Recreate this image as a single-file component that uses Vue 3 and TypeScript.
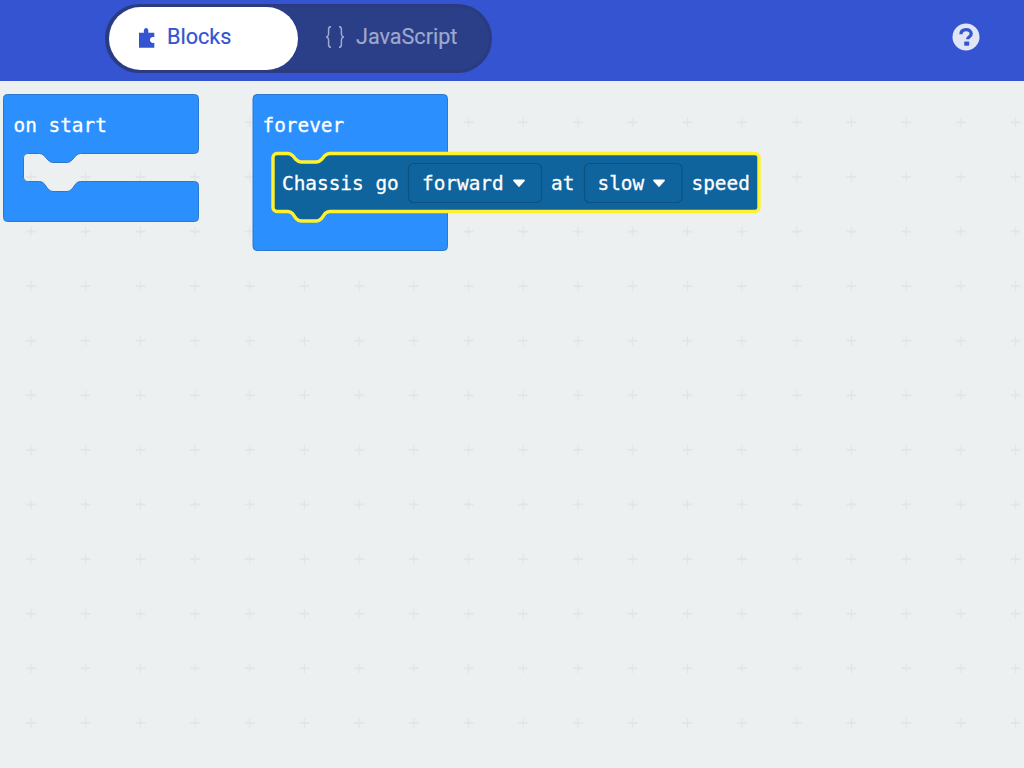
<script setup lang="ts">
</script>

<template>
  <div class="app">
    <header class="bar">
      <div class="toggle">
        <div class="tab active">
          <svg class="puzzle" width="17" height="20" viewBox="0 0 17 20" aria-hidden="true">
            <path d="M0 4.700 H5 C4.600 3.500 4.800 0 7.100 0 C9.400 0 9.600 3.500 9.300 4.700 H15.300 V9.300 C13 8.600 11 9.800 11 12 C11 14.200 13 15.400 15.300 14.700 V19.700 H0 Z" fill="#3454d1" />
          </svg>
          <span class="label">Blocks</span>
        </div>
        <div class="tab inactive">
          <svg class="braces" width="18" height="22" viewBox="0 0 18 22" aria-hidden="true">
            <path d="M5 0.700 C2.800 0.700 2.600 2 2.600 3.500 V8 C2.600 9.600 1.800 10.600 0.500 11 C1.800 11.400 2.600 12.400 2.600 14 V18.500 C2.600 20 2.800 21.300 5 21.300" />
            <path d="M13 0.700 C15.200 0.700 15.400 2 15.400 3.500 V8 C15.400 9.600 16.200 10.600 17.500 11 C16.200 11.400 15.400 12.400 15.400 14 V18.500 C15.400 20 15.200 21.300 13 21.300" />
          </svg>
          <span class="label">JavaScript</span>
        </div>
      </div>
      <svg class="help" width="28" height="28" viewBox="0 0 28 28" aria-hidden="true">
        <circle cx="14" cy="14" r="13.5" fill="#e1e6f7" />
        <path d="M8.9 11.2 C9 8.2 11.2 6.6 14.1 6.6 C17 6.6 19.2 8.2 19.2 10.8 C19.2 13.9 15.6 14 15.6 16.2" fill="none" stroke="#3454d1" stroke-width="3.3" />
        <rect x="12.2" y="18.6" width="5" height="4.2" rx="0.8" fill="#3454d1" />
      </svg>
    </header>

    <main class="workspace">
      <svg class="canvas" width="1024" height="687" viewBox="0 81 1024 687">
        <defs>
          <pattern id="grid" x="3.7" y="94.5" width="54.7" height="54.6" patternUnits="userSpaceOnUse">
            <path d="M27.3 22.800 V32.800 M22.300 27.800 H32.300" stroke="#e0e4e5" stroke-width="1.300" fill="none" />
          </pattern>
        </defs>
        <rect x="0" y="81" width="1024" height="687" fill="url(#grid)" />

        <path class="hat" d="M8 94.5 H194.5 a4 4 0 0 1 4 4 V149.5 a4 4 0 0 1 -4 4 H80.500 Q78 153.500 76 155.500 L72 160 Q69.500 162.500 67 162.500 H53 Q50.500 162.500 48 160 L44 155.500 Q42 153.500 39.500 153.500 H27.500 a4 4 0 0 0 -4 4 V177.500 a4 4 0 0 0 4 4 H39.500 Q42 181.500 44 183.500 L48 189 Q50.500 191.500 53 191.500 H67 Q69.500 191.500 72 189 L76 183.500 Q78 181.500 80.500 181.500 H194.500 a4 4 0 0 1 4 4 V217.500 a4 4 0 0 1 -4 4 H7.500 a4 4 0 0 1 -4 -4 V98.500 a4 4 0 0 1 4 -4 Z" />
        <text class="code" x="13.500" y="131.500">on start</text>

        <path class="hat" d="M257 94.5 H443.500 a4 4 0 0 1 4 4 V246.500 a4 4 0 0 1 -4 4 H257 a4 4 0 0 1 -4 -4 V98.500 a4 4 0 0 1 4 -4 Z" />
        <text class="code" x="262.500" y="131.500">forever</text>

        <path class="stmt" d="M277 153.500 H288 Q290.500 153.500 292.500 155.500 L296 159.500 Q298.500 162 301 162 H316.500 Q319 162 321.500 159.500 L325 155.500 Q327 153.500 329.500 153.500 H755 a4 4 0 0 1 4 4 V207.500 a4 4 0 0 1 -4 4 H329.500 Q327 211.500 325 213.500 L321.500 218.500 Q319 221 316.500 221 H301 Q298.500 221 296 218.500 L292.500 213.500 Q290.500 211.500 288 211.500 H277 a4 4 0 0 1 -4 -4 V157.500 a4 4 0 0 1 4 -4 Z" />
        <text class="code" x="282" y="190">Chassis go</text>

        <rect class="drop" x="408.500" y="163.500" width="133" height="39" rx="5" />
        <text class="code" x="422" y="190">forward</text>
        <path class="caret" d="M514 180.500 H524 L519 186 Z" />

        <text class="code" x="551" y="190">at</text>

        <rect class="drop" x="584.500" y="163.500" width="97.500" height="39" rx="5" />
        <text class="code" x="597.500" y="190">slow</text>
        <path class="caret" d="M654 180.500 H664 L659 186 Z" />

        <text class="code" x="691.500" y="190">speed</text>
      </svg>
    </main>
  </div>
</template>

<style scoped>
.app {
  width: 1024px;
  height: 768px;
  display: flex;
  flex-direction: column;
  overflow: hidden;
  background: #ecf0f1;
}
.bar {
  height: 81px;
  flex: none;
  display: flex;
  align-items: center;
  padding-left: 105px;
  padding-right: 45px;
  box-sizing: border-box;
  background: #3454d1;
}
.toggle {
  width: 387px;
  height: 69px;
  box-sizing: border-box;
  display: flex;
  align-items: stretch;
  border: 3px solid #2a3b7f;
  border-radius: 35px;
  background: #2b3f89;
  margin-top: -5px;
}
.tab {
  display: flex;
  align-items: center;
  font-family: Roboto, "Liberation Sans", sans-serif;
  font-size: 21.600px;
  -webkit-text-stroke: 0.200px currentColor;
}
.label {
  position: relative;
  top: -1.500px;
}
.active {
  width: 189px;
  margin: 0 0 0 1px;
  padding-left: 30px;
  box-sizing: border-box;
  background: #fff;
  border-radius: 32px;
  color: #3454d1;
  gap: 11px;
}
.inactive {
  padding-left: 28px;
  color: #9ea8cd;
  gap: 12px;
}
.braces {
  display: block;
  position: relative;
  top: -1px;
  fill: none;
  stroke: #9ea8cd;
  stroke-width: 1.500;
}
.puzzle {
  display: block;
  margin-top: 0;
}
.help {
  display: block;
  margin-left: auto;
  margin-top: -7px;
  position: relative;
  left: 0.500px;
}
.workspace {
  flex: 1;
  position: relative;
  background: #ecf0f1;
}
.canvas {
  position: absolute;
  left: 0;
  top: 0;
  display: block;
}
.hat {
  fill: #2b90fe;
  stroke: #2a78cf;
  stroke-width: 1;
}
.stmt {
  fill: #0f649e;
  stroke: #fff12e;
  stroke-width: 3.400;
}
.drop {
  fill: #0f649e;
  stroke: #0b5282;
  stroke-width: 1.200;
}
.caret {
  fill: #fff;
  stroke: #fff;
  stroke-width: 1.800;
  stroke-linejoin: round;
}
.code {
  font-family: "DejaVu Sans Mono", "Liberation Mono", monospace;
  font-size: 19.400px;
  fill: #fff;
  stroke: #fff;
  stroke-width: 0.300px;
}
</style>
